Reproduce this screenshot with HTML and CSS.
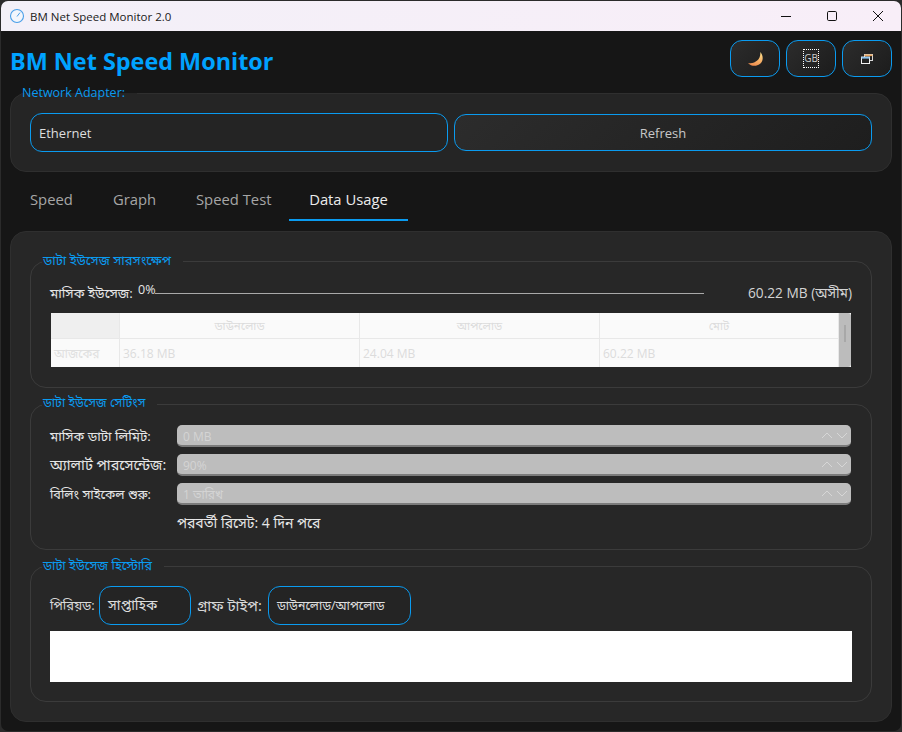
FILE: index.html
```html
<!DOCTYPE html>
<html lang="bn">
<head>
<meta charset="utf-8">
<title>BM Net Speed Monitor 2.0</title>
<link rel="stylesheet" href="styles.css">
</head>
<body>
<div class="window">
  <div class="titlebar">
    <svg class="app-icon" viewBox="0 0 16 16" width="16" height="16"><circle cx="8" cy="8" r="6.5" fill="#f3f6fc" stroke="#4a9fe8" stroke-width="1.1"/><path d="M8 8.5L11 4.6" stroke="#4a9fe8" stroke-width="1"/></svg>
    <span class="app-name">BM Net Speed Monitor 2.0</span>
    <div class="controls">
      <svg class="ctl" viewBox="0 0 46 30" width="46" height="30"><path d="M18 15.5H28" stroke="#111" stroke-width="1"/></svg>
      <svg class="ctl" viewBox="0 0 46 30" width="46" height="30"><rect x="18.5" y="10.5" width="9" height="9" rx="1.2" fill="none" stroke="#111" stroke-width="1"/></svg>
      <svg class="ctl" viewBox="0 0 46 30" width="46" height="30"><path d="M18 10L28 20M28 10L18 20" stroke="#111" stroke-width="1"/></svg>
    </div>
  </div>

  <main class="content">
    <header class="topbar">
      <h1 class="brand">BM Net Speed Monitor</h1>
      <div class="top-actions">
        <button class="icon-btn"><svg viewBox="0 0 14 13" width="15" height="14"><defs><linearGradient id="moon" x1="0.6" y1="0" x2="0.3" y2="1"><stop offset="0" stop-color="#ffdd88"/><stop offset="1" stop-color="#ee8a4c"/></linearGradient></defs><path d="M11.5 0C14.8 4 14.2 8.8 11 11.2C8 13.6 3 13.6 0 10.2C3.5 11 6.5 9.8 8.6 8C10.6 6 11.8 3.5 11.5 0Z" fill="url(#moon)"/></svg></button>
        <button class="icon-btn"><span class="gb">GB</span></button>
        <button class="icon-btn"><svg viewBox="0 0 12 10" width="12" height="10"><rect x="3.5" y="0.5" width="8" height="6" fill="none" stroke="#d9d9d9" stroke-width="1"/><rect x="3.5" y="0.5" width="8" height="1.6" fill="#e8a45c"/><rect x="0.5" y="3" width="8" height="6.5" fill="#222" stroke="#f0f0f0" stroke-width="1"/><rect x="0.5" y="3" width="8" height="1.6" fill="#8fc6f0"/></svg></button>
      </div>
    </header>

    <section class="group adapter">
      <span class="legend adapter-legend">Network Adapter:</span>
      <div class="adapter-row">
        <div class="combo adapter-combo">Ethernet</div>
        <button class="refresh">Refresh</button>
      </div>
    </section>

    <nav class="tabs">
      <span class="tab tab-speed">Speed</span>
      <span class="tab tab-graph">Graph</span>
      <span class="tab tab-test">Speed Test</span>
      <span class="tab tab-active">Data Usage</span>
    </nav>

    <section class="panel">
      <section class="sub sub-summary">
        <span class="legend">ডাটা ইউসেজ সারসংক্ষেপ</span>
        <div class="usage-row">
          <span class="usage-label">মাসিক ইউসেজ:</span>
          <span class="usage-pct">0%</span>
          <span class="usage-line"></span>
          <span class="usage-total">60.22 MB (অসীম)</span>
        </div>
        <div class="table-wrap">
          <table class="usage-table">
            <thead><tr><th class="corner"></th><th class="col">ডাউনলোড</th><th class="col">আপলোড</th><th>মোট</th></tr></thead>
            <tbody><tr><td class="row-head">আজকের</td><td>36.18 MB</td><td>24.04 MB</td><td>60.22 MB</td></tr></tbody>
          </table>
          <div class="scroll"><span class="thumb"></span></div>
        </div>
      </section>

      <section class="sub sub-settings">
        <span class="legend legend-settings">ডাটা ইউসেজ সেটিংস</span>
        <div class="form-grid">
          <span class="label-limit">মাসিক ডাটা লিমিট:</span>
          <div class="spin"><span class="spin-text">0 MB</span><svg class="arrows" viewBox="0 0 27 8" width="27" height="8"><path d="M1 7L6 2L11 7M16 2L21 7L26 2" fill="none" stroke="#d6d6d6" stroke-width="1"/></svg></div>
          <span class="label-wide">অ্যালার্ট পারসেন্টেজ:</span>
          <div class="spin"><span class="spin-text">90%</span><svg class="arrows" viewBox="0 0 27 8" width="27" height="8"><path d="M1 7L6 2L11 7M16 2L21 7L26 2" fill="none" stroke="#d6d6d6" stroke-width="1"/></svg></div>
          <span class="label-cycle">বিলিং সাইকেল শুরু:</span>
          <div class="spin"><span class="spin-text">1 তারিখ</span><svg class="arrows" viewBox="0 0 27 8" width="27" height="8"><path d="M1 7L6 2L11 7M16 2L21 7L26 2" fill="none" stroke="#d6d6d6" stroke-width="1"/></svg></div>
          <span></span>
          <span class="reset">পরবর্তী রিসেট: 4 দিন পরে</span>
        </div>
      </section>

      <section class="sub sub-history">
        <span class="legend legend-history">ডাটা ইউসেজ হিস্টোরি</span>
        <div class="history-row">
          <span class="period-label">পিরিয়ড:</span>
          <div class="combo period">সাপ্তাহিক</div>
          <span class="graph-label">গ্রাফ টাইপ:</span>
          <div class="combo graph-type">ডাউনলোড/আপলোড</div>
        </div>
        <div class="chart"></div>
      </section>
    </section>
  </main>
</div>
</body>
</html>
```
FILE: styles.css
```css
* { box-sizing: border-box; }
html, body { margin: 0; padding: 0; }
body {
  width: 902px;
  height: 732px;
  overflow: hidden;
  background: #2a2a2a;
  font-family: "Open Sans", "Noto Sans", "Noto Sans Bengali", sans-serif;
  font-size: 13px;
  color: #e0e0e0;
}
.window {
  width: 902px;
  height: 732px;
  padding: 1px;
  background: #2b2b2b;
  display: flex;
  flex-direction: column;
}
.titlebar {
  height: 30px;
  flex: none;
  display: flex;
  align-items: center;
  padding-left: 8px;
  background: linear-gradient(90deg, #f3f0f8, #f8eef8);
  border-radius: 7px 7px 0 0;
  color: #1a1a1a;
}
.app-icon { margin-right: 5px; }
.app-name { font-size: 11.5px; }
.controls { margin-left: auto; display: flex; }
.content {
  flex: 1;
  background: #161616;
  padding: 0 9px;
  border-radius: 0 0 7px 7px;
  display: flex;
  flex-direction: column;
}
.topbar {
  height: 62px;
  flex: none;
  display: flex;
  justify-content: space-between;
  padding-top: 9px;
}
.brand {
  margin: 0;
  font-size: 23.4px;
  line-height: 42px;
  height: 42px;
  font-weight: 700;
  color: #00a2ff;
}
.top-actions { display: flex; gap: 6px; height: 38px; }
.icon-btn {
  width: 50px;
  height: 37px;
  padding: 0;
  border: 1px solid #0a9bf0;
  border-radius: 12px;
  background: linear-gradient(135deg, #2c2c2c, #1c1c1c);
  display: flex;
  align-items: center;
  justify-content: center;
}
.gb {
  width: 16px;
  height: 19px;
  border: 1px dotted #ffffff;
  color: #cfcfcf;
  font: 10px/17px "Open Sans", sans-serif;
  text-align: center;
}
.group {
  position: relative;
  border: 1px solid #2f2f2f;
  border-radius: 16px;
  background: #252525;
}
.legend {
  position: absolute;
  left: 11px;
  top: -9px;
  padding: 0 12px 0 1px;
  font-size: 13px;
  line-height: 16px;
  color: #0a9bf0;
  background: #252525;
}
.adapter { height: 79px; flex: none; padding: 19px; }
.adapter-legend {
  left: 10px;
  font-size: 12.5px;
  background: linear-gradient(#161616 50%, #252525 50%);
}
.adapter-row { display: flex; gap: 6px; }
.combo {
  border: 1px solid #0a9bf0;
  border-radius: 12px;
  height: 39px;
  display: flex;
  align-items: center;
  padding-left: 8px;
  background: #242424;
  color: #dedede;
}
.adapter-combo { width: 418px; }
.refresh {
  width: 418px;
  height: 37px;
  margin-top: 1px;
  border: 1px solid #0a9bf0;
  border-radius: 12px;
  background: linear-gradient(135deg, #2c2c2c, #1e1e1e);
  color: #c8c8c8;
  font: 13px "Open Sans", sans-serif;
}
.tabs {
  flex: none;
  height: 59px;
  padding-top: 8px;
  display: flex;
  font-size: 14.8px;
  color: #a6a6a6;
}
.tab { height: 41px; line-height: 39px; }
.tab-speed { margin-left: 20px; width: 83px; }
.tab-graph { width: 83px; }
.tab-test { width: 93px; }
.tab-active {
  width: 119px;
  text-align: center;
  color: #ececec;
  border-bottom: 2px solid #0a9bf0;
}
.panel {
  flex: none;
  height: 491px;
  border: 1px solid #2f2f2f;
  border-radius: 16px;
  background: #272727;
  padding: 29px 19px 0;
  display: flex;
  flex-direction: column;
  gap: 16px;
}
.sub {
  position: relative;
  flex: none;
  border: 1px solid #3b3b3b;
  border-radius: 16px;
  padding: 0 19px;
}
.sub .legend { background: #272727; top: -10px; }
.sub .legend-settings { font-size: 12.4px; }
.sub .legend-history { font-size: 12.7px; }
.sub-summary { height: 127px; }
.sub-settings { height: 146px; }
.sub-history { height: 136px; }
.usage-row {
  height: 51px;
  display: flex;
  align-items: flex-start;
  padding-top: 21px;
  position: relative;
  color: #e6e6e6;
}
.usage-label { line-height: 20px; font-size: 13.4px; }
.usage-pct { position: absolute; left: 88px; top: 20px; font-size: 12.5px; line-height: 16px; }
.usage-line {
  position: absolute;
  left: 105px;
  top: 31px;
  width: 549px;
  height: 1px;
  background: #a9a9a9;
}
.usage-total { margin-left: auto; line-height: 20px; font-size: 13.7px; color: #d4d4d4; }
.table-wrap {
  display: flex;
  width: 800px;
  height: 54px;
  margin-left: 1px;
  background: #fafafa;
}
.usage-table {
  width: 788px;
  height: 54px;
  border-collapse: separate;
  border-spacing: 0;
  table-layout: fixed;
  font-size: 12px;
  color: #dcdcdc;
}
.usage-table th, .usage-table td {
  padding: 1px 3px 0;
  border-right: 1px solid #e8e8e8;
  font-weight: 400;
  overflow: hidden;
  white-space: nowrap;
}
.usage-table th {
  height: 26px;
  text-align: center;
  font-size: 11.5px;
  border-bottom: 1px solid #e8e8e8;
}
.usage-table th.col { width: 240px; }
.usage-table td { height: 28px; }
.usage-table .corner { width: 69px; background: #efefef; }
.usage-table .row-head { color: #e0e0e0; font-size: 12px; }
.scroll {
  width: 12px;
  height: 54px;
  background: #bcbcbc;
  border-radius: 0 3px 3px 0;
  display: flex;
  justify-content: center;
  padding-top: 12px;
}
.thumb { width: 2px; height: 17px; background: #a8a8a8; }
.form-grid {
  display: grid;
  grid-template-columns: 127px 674px;
  row-gap: 7px;
  padding-top: 20px;
  align-items: center;
  color: #e6e6e6;
  white-space: nowrap;
}
.label-limit { font-size: 13.3px; }
.label-wide { font-size: 14.4px; }
.label-cycle { font-size: 12.7px; }
.spin {
  height: 22px;
  display: flex;
  align-items: center;
  justify-content: space-between;
  padding: 0 3px 0 6px;
  background: #bdbdbd;
  border-radius: 5px;
  border-bottom: 2px solid #7b7b7b;
  color: #d4d4d4;
  font-size: 12px;
}
.spin-text { padding-top: 3px; }
.arrows { flex: none; }
.reset { padding-top: 1px; line-height: 20px; font-size: 14px; }
.history-row {
  display: flex;
  align-items: center;
  padding-top: 19px;
  color: #d8d8d8;
}
.period-label { width: 49px; font-size: 13px; }
.period { width: 92px; font-size: 14px; }
.graph-label { width: 71px; margin-left: 6px; font-size: 14.8px; white-space: nowrap; }
.graph-type { width: 143px; font-size: 12.4px; }
.chart { height: 51px; margin-top: 6px; background: #ffffff; }
```
